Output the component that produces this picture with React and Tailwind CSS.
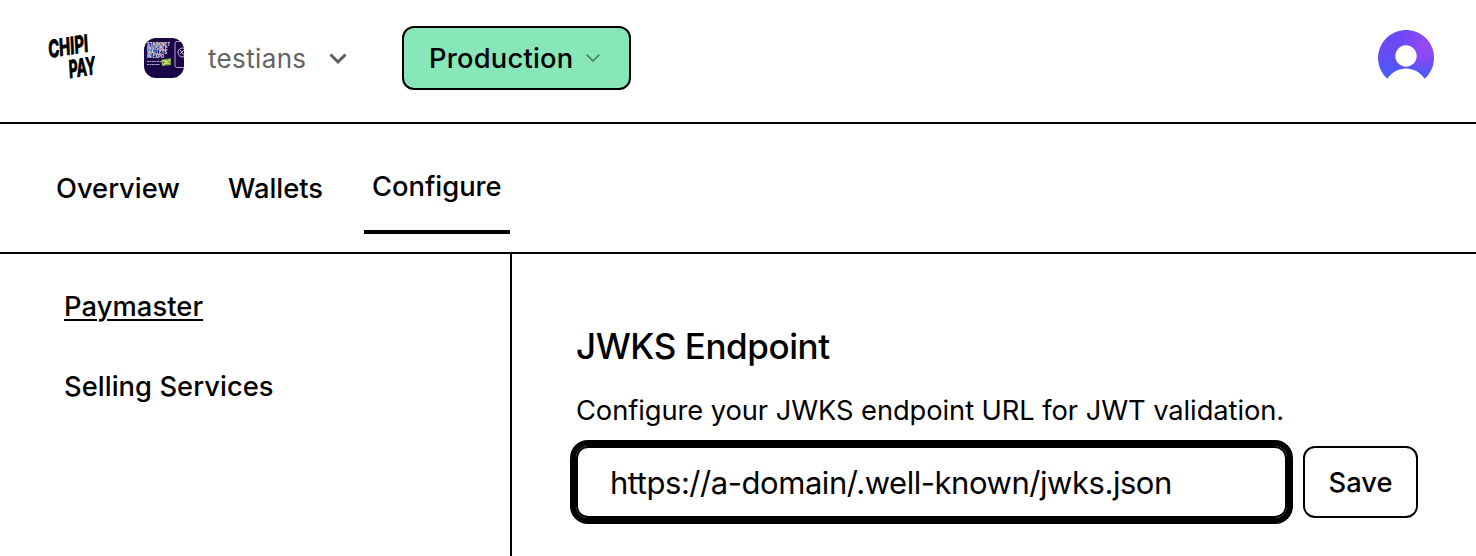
import React from "react";

function Logo() {
  return (
    <svg width="60" height="60" viewBox="0 0 60 60" className="overflow-visible" aria-label="Chipi Pay">
      <g fontFamily="Inter, sans-serif" fontWeight="700" fontStyle="italic" fill="#000" stroke="#000" strokeWidth="1" strokeLinejoin="round">
        <text transform="translate(5.500 27.700) rotate(-9)" fontSize="23.5" textLength="40" lengthAdjust="spacingAndGlyphs">CHIPI</text>
        <text transform="translate(26 48) rotate(-9)" fontSize="24" textLength="27" lengthAdjust="spacingAndGlyphs">PAY</text>
      </g>
    </svg>
  );
}

function OrgImage() {
  return (
    <svg width="40" height="40" viewBox="0 0 40 40" className="overflow-hidden rounded-[12px] bg-[#1a0547]">
      <g fontFamily="Inter, sans-serif" fontWeight="700" fill="#fff" fontSize="4.3">
        <text x="3" y="7.8" textLength="23" lengthAdjust="spacingAndGlyphs">STARKNET</text>
        <text x="3" y="11.8" textLength="20.5" lengthAdjust="spacingAndGlyphs">INVISIBLE</text>
        <text x="3" y="15.7" textLength="20" lengthAdjust="spacingAndGlyphs">WALLETS</text>
        <text x="3" y="19.7" textLength="17" lengthAdjust="spacingAndGlyphs">IN EXPO</text>
      </g>
      <path d="M3 23.500h14M3 26.500h13" stroke="#c9c0dd" strokeWidth=".9" strokeDasharray="2 .5" />
      <path d="M17 22l10-2v7l-9 1z" fill="#68a34b" />
      <path d="M18 23l3-1 1 2 4-2M19 27l3-2 4 1" stroke="#f5de5b" strokeWidth="1.2" fill="none" />
      <path d="M40 3.500h-7q-2 0-2 2v22q0 2 2 2h7" fill="none" stroke="#d8d3e5" strokeWidth=".8" />
      <circle cx="38.5" cy="14.500" r="4.5" fill="none" stroke="#c9c0dd" strokeWidth="1" />
      <path d="M36 12l4 5M36 16l4-4" stroke="#c9c0dd" strokeWidth="1" />
    </svg>
  );
}

function Avatar() {
  return (
    <svg width="56" height="56" viewBox="0 0 56 56">
      <defs>
        <linearGradient id="base" gradientUnits="userSpaceOnUse" x1="31" y1="0" x2="22" y2="56">
          <stop offset="0" stopColor="#6c47f5" />
          <stop offset=".4" stopColor="#6a4af6" />
          <stop offset="1" stopColor="#3d63fb" />
        </linearGradient>
        <radialGradient id="glow" gradientUnits="userSpaceOnUse" cx="47" cy="17" r="26">
          <stop offset="0" stopColor="#9b48f3" />
          <stop offset="1" stopColor="#9b48f3" stopOpacity="0" />
        </radialGradient>
      </defs>
      <path d="M9.300 48.800A28 28 0 1 1 46.700 48.800C42 42 35 38.500 28 38.500S14 42 9.300 48.800Z" fill="url(#base)" />
      <path d="M9.300 48.800A28 28 0 1 1 46.700 48.800C42 42 35 38.500 28 38.500S14 42 9.300 48.800Z" fill="url(#glow)" />
      <circle cx="28" cy="26" r="10.7" fill="#fff" />
    </svg>
  );
}

export default function App() {
  return (
    <div className="flex h-[556px] flex-col overflow-hidden bg-white font-['Inter',sans-serif] text-[27.3px] leading-[41px] font-[480] text-black">
      <header className="flex h-[124px] shrink-0 items-start border-b-2 border-black pl-11">
        <div className="mt-[30px] w-[100px]"><Logo /></div>
        <div className="mt-[38px] flex h-10 items-center">
          <OrgImage />
          <span className="mt-px ml-6 w-[98px] text-[26px] font-normal tracking-[0.35px] whitespace-nowrap text-[#646464]">testians</span>
          <svg className="mt-[2px] ml-[23px]" width="18" height="12" viewBox="0 0 18 12" fill="none" stroke="#5e5e5e" strokeWidth="3"><path d="M1.5 1.5L9 9l7.500-7.500" /></svg>
        </div>
        <button className="mt-[26px] ml-[55px] flex h-16 w-[229px] items-center rounded-[12px] border-2 border-black bg-[#88e7b8] pl-[25px]">
          <span className="w-[145px] pt-px text-left tracking-[0.22px]">Production</span>
          <svg className="ml-[12px]" width="14" height="8" viewBox="0 0 14 8" fill="none" stroke="#448066" strokeWidth="1.700"><path d="M.7.7L7 7 13.300.7" /></svg>
        </button>
        <div className="mt-[30px] mr-[42px] ml-auto"><Avatar /></div>
      </header>
      <nav className="flex h-[130px] shrink-0 border-b-2 border-black pl-14">
        <a className="mt-11 w-[172px]">Overview</a>
        <a className="mt-11 w-[136px]">Wallets</a>
        <a className="mt-[42px] h-[68px] w-[146px] border-b-4 border-black pl-2">Configure</a>
      </nav>
      <div className="flex flex-1">
        <aside className="flex w-[512px] flex-col gap-[39px] border-r-2 border-black pt-8 pl-16">
          <a className="tracking-[0.1px] underline decoration-2 underline-offset-[3px]">Paymaster</a>
          <a className="tracking-[0.06px]">Selling Services</a>
        </aside>
        <main className="flex-1 pt-[67px] pl-16">
          <h1 className="text-[35px] leading-[50px] tracking-[-0.43px]">JWKS Endpoint</h1>
          <p className="mt-[19px] font-normal tracking-[-0.07px] whitespace-nowrap">Configure your JWKS endpoint URL for JWT validation.</p>
          <div className="mt-[15px] flex gap-[16px]">
            <div className="flex h-[72px] w-[711px] items-center rounded-[12px] border-2 border-black pt-px pl-8 text-[31px] font-normal tracking-[-0.46px] whitespace-nowrap shadow-[0_0_0_6px_#000]">https://a-domain/.well-known/jwks.json</div>
            <button className="h-[72px] w-[115px] rounded-[12px] border-2 border-black">Save</button>
          </div>
        </main>
      </div>
    </div>
  );
}
